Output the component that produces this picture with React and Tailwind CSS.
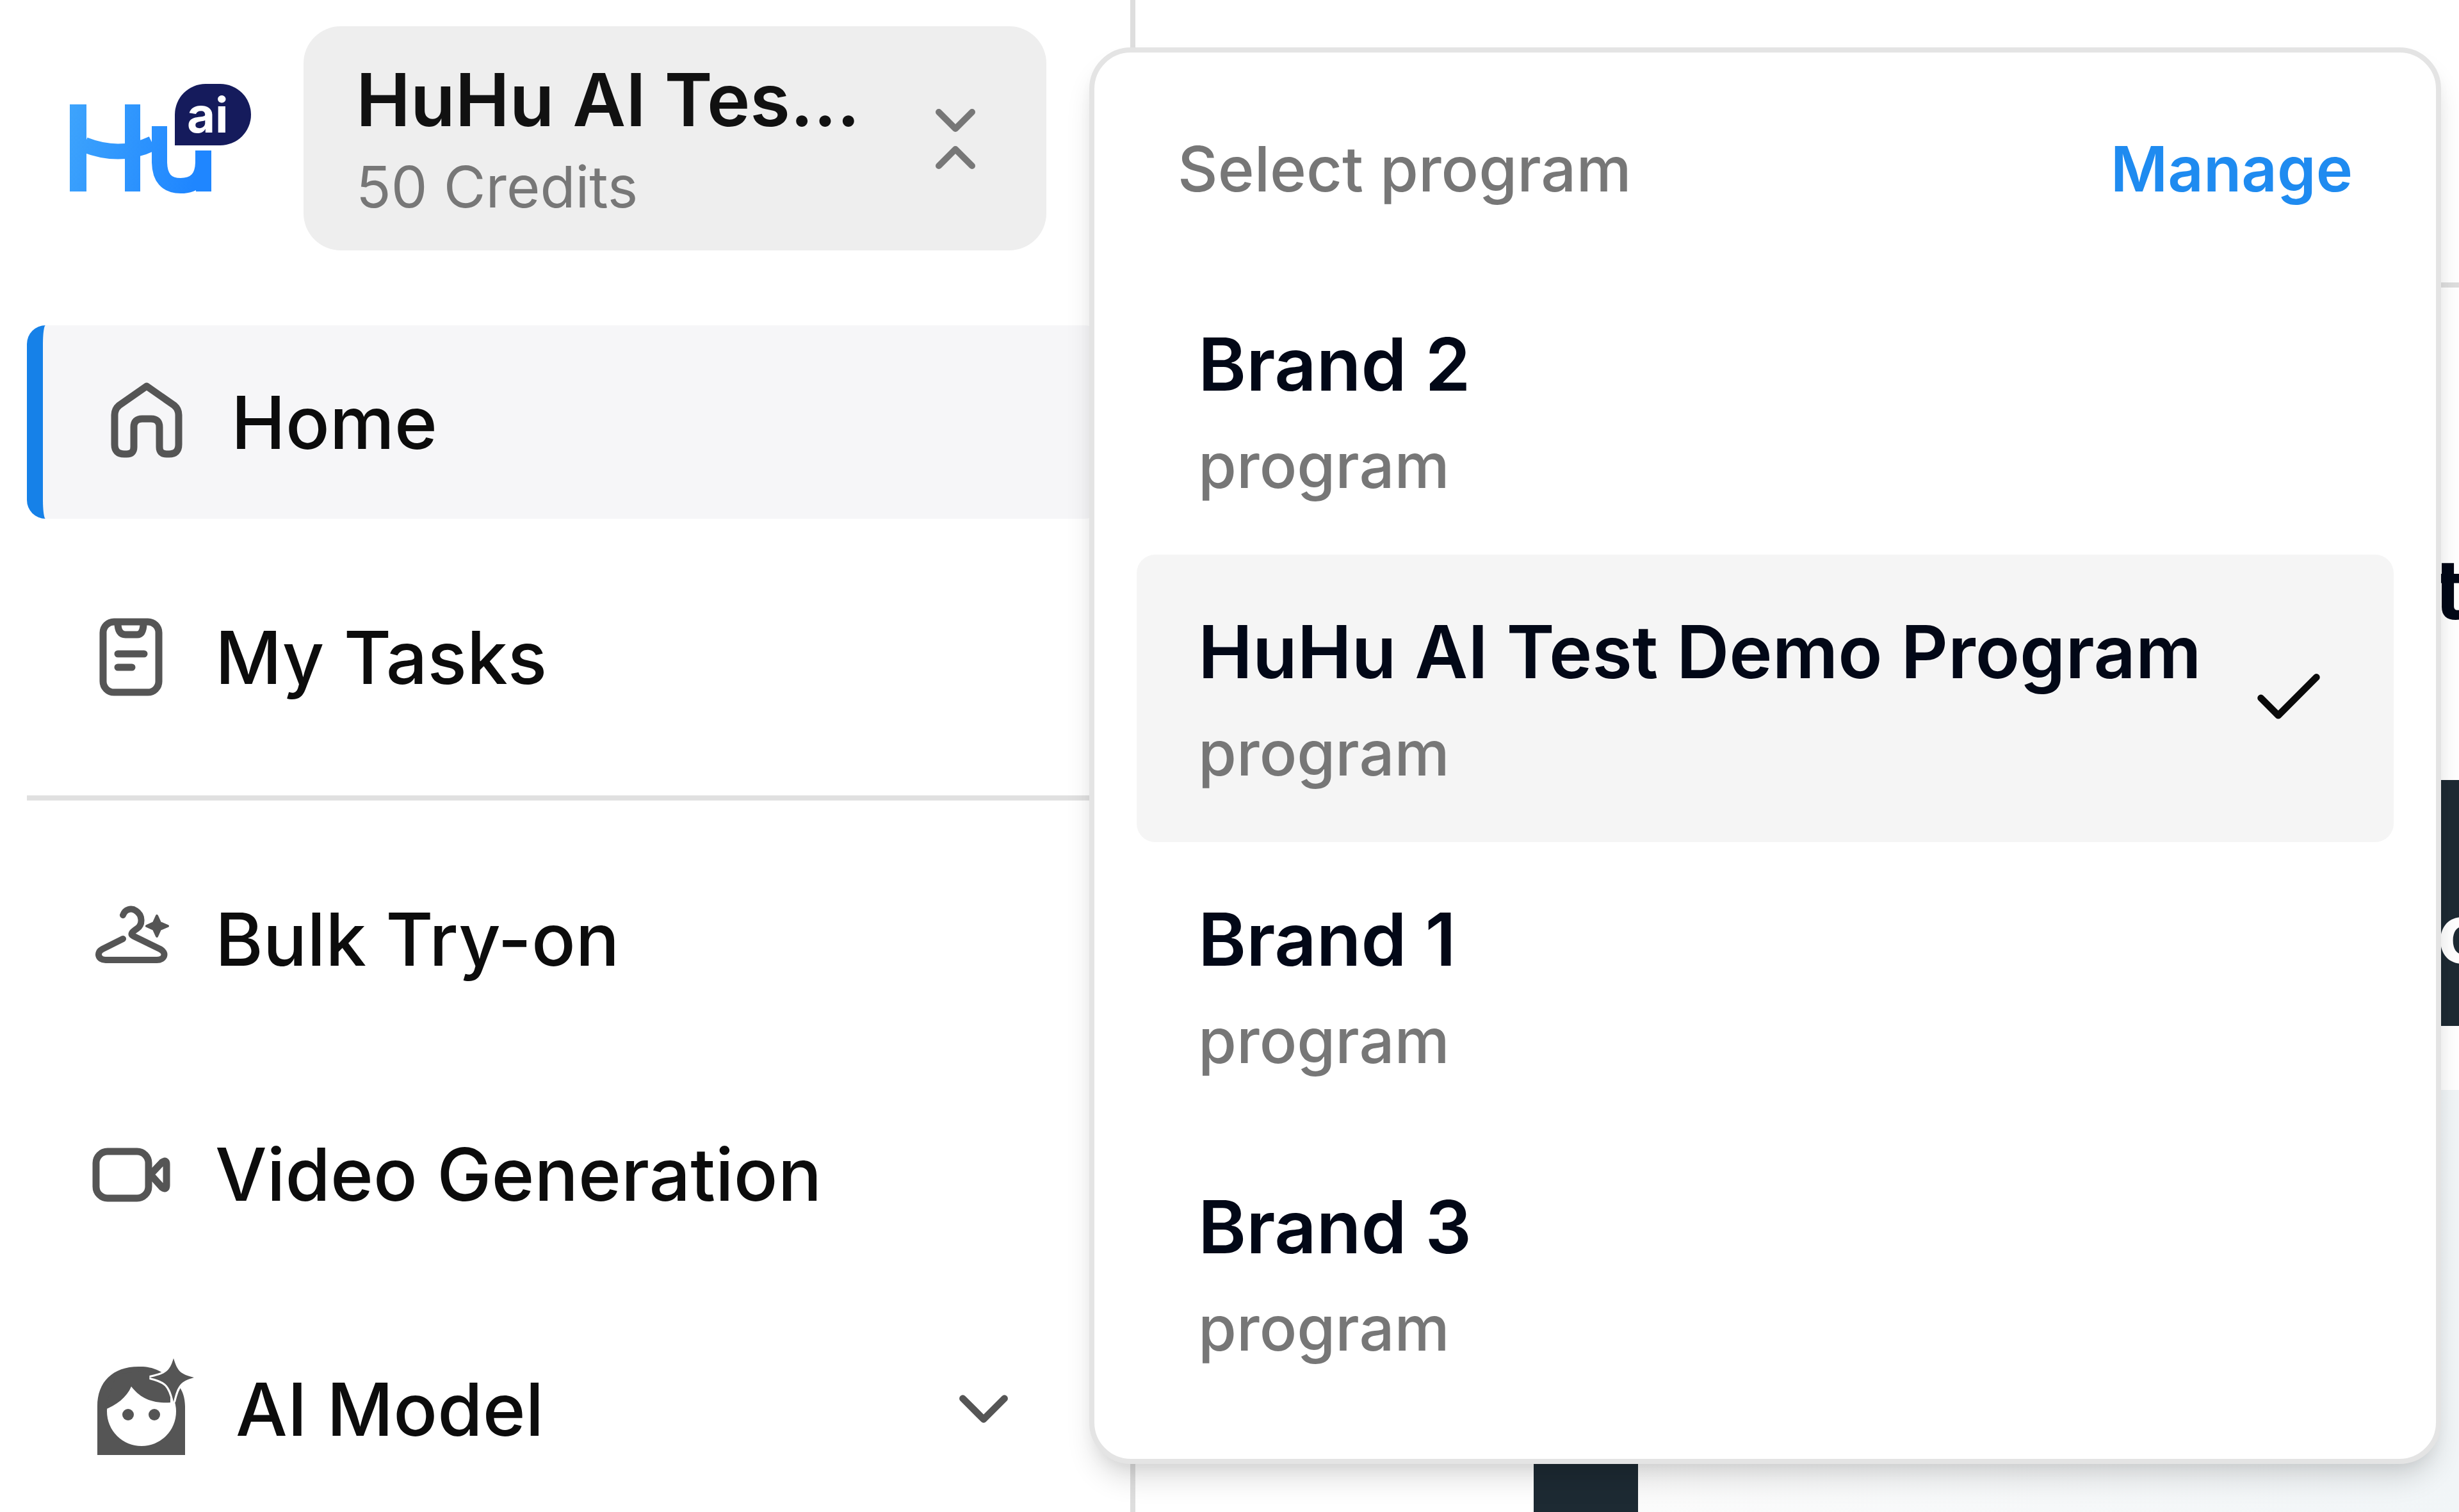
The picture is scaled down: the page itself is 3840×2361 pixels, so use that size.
import { Check, ChevronDown } from 'lucide-react'

const PROGRAMS = [
  { id: 1, name: 'Brand 2', type: 'program' },
  { id: 2, name: 'HuHu AI Test Demo Program', type: 'program', selected: true },
  { id: 3, name: 'Brand 1', type: 'program' },
  { id: 4, name: 'Brand 3', type: 'program' }
]

function Logo() {
  return (
    <svg viewBox="0 0 290 180" className="h-[180px] w-[290px] shrink-0" role="img" aria-label="HuHu AI">
      <defs>
        <linearGradient id="hu" gradientUnits="userSpaceOnUse" x1="0" y1="0" x2="222" y2="60">
          <stop offset="0" stopColor="#3fa5fc" />
          <stop offset="1" stopColor="#1f86ff" />
        </linearGradient>
      </defs>
      <g fill="none" stroke="url(#hu)" strokeWidth="24">
        <path d="M14 37V173" strokeWidth="26" />
        <path d="M99 37V173" />
        <path d="M24 100Q80 122 130 98" />
        <path d="M141 71V126Q141 164 174 164Q209 164 209 126V109" />
        <path d="M210 109V173" />
      </g>
      <path d="M165 101V53A48 48 0 0 1 213 5H236A48 48 0 0 1 236 101Z" fill="#151b5c" />
      <text x="184" y="81" fill="#fff" fontSize="76" fontWeight="700" fontFamily="Inter, sans-serif">ai</text>
    </svg>
  )
}

function HomeIcon() {
  return (
    <svg viewBox="0 0 144 144" className="size-[144px] shrink-0" fill="none" stroke="#555" strokeWidth="11" strokeLinejoin="round">
      <path d="M22 61Q22 52 29 46L72 16L115 46Q122 52 122 61V107Q122 122 107 122H103Q92 122 92 111V80Q92 67 79 67H65Q52 67 52 80V111Q52 122 41 122H37Q22 122 22 107Z" />
    </svg>
  )
}

function TasksIcon() {
  return (
    <svg viewBox="0 0 144 144" className="size-[144px] shrink-0" fill="none" stroke="#555" strokeWidth="11" strokeLinecap="round">
      <rect x="29" y="17" width="87" height="110" rx="17" />
      <path d="M52 19Q52 37 64 37H82Q92 37 92 19M52 67H93M52 88H74" />
    </svg>
  )
}

function HangerIcon() {
  return (
    <svg viewBox="0 0 144 144" className="size-[144px] shrink-0" fill="none" stroke="#555" strokeWidth="10" strokeLinecap="round" strokeLinejoin="round">
      <path d="M60 35C63 26 73 23 80 28C91 35 91 50 82 56C73 62 71 65 77 68L118 88C129 94 125 105 113 105H33C21 105 18 93 28 88L60 72" />
      <path d="M113 36L118 47L130 52L118 57L113 68L108 57L97 52L108 47Z" fill="#555" strokeWidth="4" />
    </svg>
  )
}

function VideoIcon() {
  return (
    <svg viewBox="0 0 144 144" className="size-[144px] shrink-0" fill="none" stroke="#555" strokeWidth="11" strokeLinejoin="round">
      <rect x="18" y="37" width="82" height="73" rx="18" />
      <path d="M103 73L121 54Q128 49 128 57V90Q128 98 121 93Z" />
    </svg>
  )
}

function ModelIcon() {
  return (
    <svg viewBox="0 0 176 176" className="size-[176px] shrink-0">
      <path d="M20 160V84C20 45 45 21 87 22C98 22 106 24 113 27C136 38 157 52 157 84V160Z" fill="#555" />
      <circle cx="89" cy="92" r="54" fill="#fff" />
      <path d="M30 90C50 82 66 70 73 53C86 70 104 80 134 78V50L98 28L50 34Z" fill="#555" />
      <circle cx="68" cy="97" r="9" fill="#555" />
      <circle cx="109" cy="97" r="9" fill="#555" />
      <path d="M139 9C145 29 150 34 171 39C150 45 145 51 139 77C133 51 127 45 102 39C127 34 133 29 139 9Z" fill="#555" stroke="#fff" strokeWidth="6" paintOrder="stroke" />
    </svg>
  )
}

const NAV = [
  { label: 'Home', Icon: HomeIcon, active: true },
  { label: 'My Tasks', Icon: TasksIcon },
  { divider: true },
  { label: 'Bulk Try-on', Icon: HangerIcon },
  { label: 'Video Generation', Icon: VideoIcon },
  { label: 'AI Model', Icon: ModelIcon, expandable: true }
]

function ProgramSwitcher() {
  return (
    <button
      type="button"
      className="flex h-[350px] w-[1160px] items-center justify-between rounded-[58px] bg-[#eeeeee] pr-[99px] pl-[82px] text-left"
    >
      <span className="flex flex-col pt-2 whitespace-nowrap">
        <span className="text-[114px] leading-[144px] font-semibold text-[#111]">HuHu AI Tes…</span>
        <span className="text-[90px] leading-[128px] text-[#777]">50 Credits</span>
      </span>
      <svg viewBox="0 0 86 116" className="h-[116px] w-[86px]" fill="none" stroke="#777" strokeWidth="10" strokeLinecap="round" strokeLinejoin="round">
        <path d="M17 17L43 43L69 17M17 101L43 75L69 101" />
      </svg>
    </button>
  )
}

function NavItem({ item }) {
  const { label, Icon, active, expandable } = item

  return (
    <a
      href="#"
      className={
        'flex h-[302px] items-center gap-[60px] pr-[122px] pl-[90px] text-[114px] leading-[173px] font-medium text-[#0c0c0c] ' +
        (active ? 'rounded-[29px] border-l-[25px] border-[#1681e8] bg-[#f6f6f8]' : '')
      }
    >
      <Icon />
      <span className="flex-1">{label}</span>
      {expandable && <ChevronDown className="size-[130px] text-[#555]" strokeWidth={2} />}
    </a>
  )
}

function ProgramMenu() {
  return (
    <div className="absolute top-[74px] left-[1701px] w-[2111px] rounded-[65px] border-8 border-[#e4e4e4] bg-white px-[66px] pb-[65px] shadow-[0_29px_43px_-5px_rgba(0,0,0,0.12),0_14px_29px_-14px_rgba(0,0,0,0.1)]">
      <div className="flex items-center justify-between px-[64px] pt-[110px] pb-[81px] text-[97px] leading-[144px]">
        <h2 className="font-medium text-[#777]">Select program</h2>
        <a href="#" className="font-semibold text-[#1f8bf0]">Manage</a>
      </div>

      <ul>
        {PROGRAMS.map(program => (
          <li key={program.id}>
            <button
              type="button"
              className={
                'flex w-full items-center justify-between rounded-[29px] pt-[65px] pr-[99px] pb-[67px] pl-[96px] text-left ' +
                (program.selected ? 'bg-[#f5f5f5]' : '')
              }
            >
              <span className="flex flex-col">
                <span className="text-[114px] leading-[173px] font-semibold text-[#020817]">{program.name}</span>
                <span className="text-[97px] leading-[144px] font-medium text-[#777]">{program.type}</span>
              </span>
              {program.selected && <Check className="size-[130px] text-[#0a0a0a]" strokeWidth={2} />}
            </button>
          </li>
        ))}
      </ul>
    </div>
  )
}

export default function App() {
  return (
    <div className="relative flex h-screen overflow-hidden bg-white font-['Inter',sans-serif]">
      <aside className="w-[1773px] shrink-0 border-r-8 border-[#dedede] px-[42px]">
        <div className="flex items-start gap-[76px] pt-[41px] pl-[66px]">
          <div className="flex h-[350px] items-center">
            <Logo />
          </div>
          <ProgramSwitcher />
        </div>

        <nav className="flex flex-col gap-[65px] pt-[117px]">
          {NAV.map((item, i) =>
            item.divider
              ? <hr key={i} className="border-t-8 border-[#e0e0e0]" />
              : <NavItem key={i} item={item} />
          )}
        </nav>
      </aside>

      <main className="flex min-w-0 flex-1 flex-col overflow-hidden">
        <header className="h-[449px] shrink-0 border-b-8 border-[#dedede]" />
        <div className="flex flex-col pt-[399px] pl-[1829px]">
          <h1 className="pl-[200px] text-[130px] leading-[144px] font-bold text-[#020817]">t</h1>
          <button
            type="button"
            className="mt-[226px] flex h-[384px] items-end bg-[#1d2a33] pb-[73px] pl-[204px] text-[130px] leading-[144px] font-bold text-white"
          >
            o
          </button>
        </div>
        <div className="mt-[100px] flex flex-1 pl-[622px]">
          <div className="w-[163px] bg-[#1d2a33]" />
          <div className="flex-1 bg-linear-to-r from-[#fbfbfb] to-[#f1f5f7]" />
        </div>
      </main>

      <ProgramMenu />
    </div>
  )
}
